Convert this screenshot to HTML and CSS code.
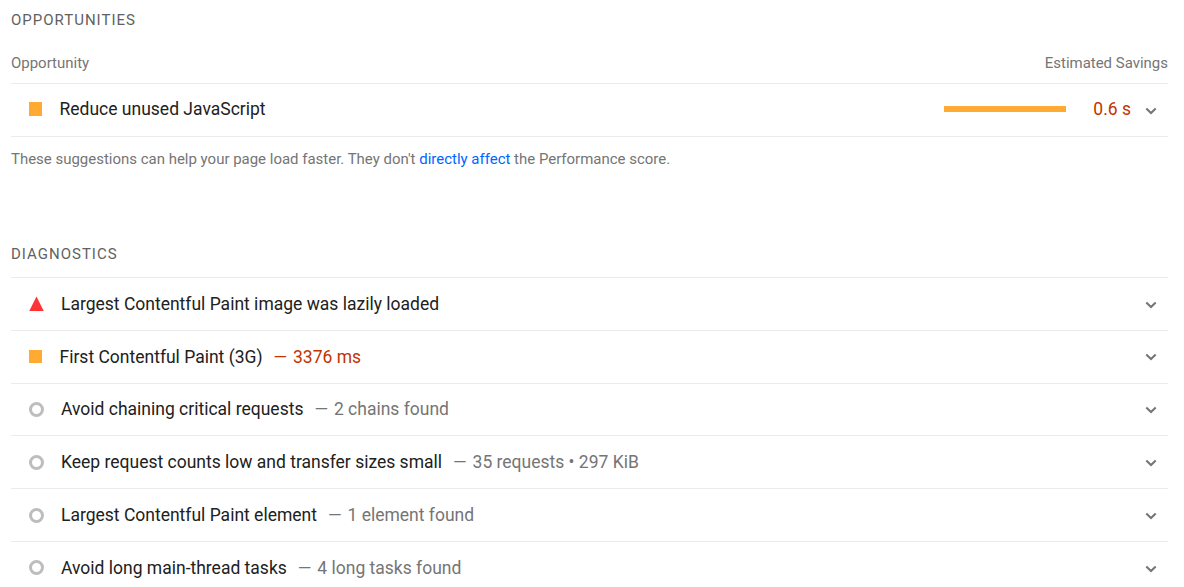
FILE: index.html
```html
<!DOCTYPE html>
<html lang="en">
<head>
  <meta charset="UTF-8">
  <meta name="viewport" content="width=device-width, initial-scale=1.0">
  <title>Performance report</title>
  <link rel="stylesheet" href="styles.css">
</head>
<body>
  <svg class="defs" width="0" height="0">
    <symbol id="chevron" viewBox="0 0 12 8">
      <path d="M1.3 1.6 L6 6 L10.7 1.6" fill="none" stroke="#757575" stroke-width="2.1"/>
    </symbol>
  </svg>

  <section class="opportunities">
    <h2 class="group-title">OPPORTUNITIES</h2>
    <div class="table-head">
      <span>Opportunity</span>
      <span>Estimated Savings</span>
    </div>
    <div class="audit">
      <span class="icon square"></span>
      <span class="title">Reduce unused JavaScript</span>
      <span class="bar"></span>
      <span class="savings">0.6 s</span>
      <svg class="chevron"><use href="#chevron"/></svg>
    </div>
    <p class="footer">These suggestions can help your page load faster. They don't <a href="#">directly affect</a> the Performance score.</p>
  </section>

  <section class="diagnostics">
    <h2 class="group-title">DIAGNOSTICS</h2>
    <div class="audit">
      <span class="icon triangle"></span>
      <span class="title">Largest Contentful Paint image was lazily loaded</span>
      <svg class="chevron"><use href="#chevron"/></svg>
    </div>
    <div class="audit">
      <span class="icon square"></span>
      <span class="title">First Contentful Paint (3G)</span>
      <span class="value average"><span class="dash">—</span> 3376 ms</span>
      <svg class="chevron"><use href="#chevron"/></svg>
    </div>
    <div class="audit">
      <span class="icon circle"></span>
      <span class="title">Avoid chaining critical requests</span>
      <span class="value"><span class="dash">—</span> 2 chains found</span>
      <svg class="chevron"><use href="#chevron"/></svg>
    </div>
    <div class="audit">
      <span class="icon circle"></span>
      <span class="title">Keep request counts low and transfer sizes small</span>
      <span class="value"><span class="dash">—</span> 35 requests • 297 KiB</span>
      <svg class="chevron"><use href="#chevron"/></svg>
    </div>
    <div class="audit">
      <span class="icon circle"></span>
      <span class="title">Largest Contentful Paint element</span>
      <span class="value"><span class="dash">—</span> 1 element found</span>
      <svg class="chevron"><use href="#chevron"/></svg>
    </div>
    <div class="audit">
      <span class="icon circle"></span>
      <span class="title">Avoid long main-thread tasks</span>
      <span class="value"><span class="dash">—</span> 4 long tasks found</span>
      <svg class="chevron"><use href="#chevron"/></svg>
    </div>
  </section>
</body>
</html>
```

FILE: styles.css
```css
* {
  box-sizing: border-box;
}
body {
  margin: 0;
  padding: 0 16px 0 11px;
  height: 587px;
  overflow: hidden;
  background-color: #fff;
  color: #212121;
  font-family: Roboto, sans-serif;
  font-size: 17.5px;
}
.defs {
  display: block;
}
.group-title {
  margin: 0;
  color: #616161;
  font-size: 15px;
  font-weight: 400;
  line-height: 20px;
  letter-spacing: 1px;
}
.opportunities {
  height: 234px;
  padding-top: 10px;
}
.diagnostics {
  padding-top: 10px;
}
.diagnostics .group-title {
  margin-bottom: 13px;
}
.table-head {
  display: flex;
  justify-content: space-between;
  margin-top: 23px;
  height: 30px;
  color: #757575;
  font-size: 14.98px;
  line-height: 20px;
}
.audit {
  display: flex;
  align-items: center;
  height: 52.8px;
  padding: 0 11px 0 18px;
  border-top: 1px solid #ebebeb;
  line-height: 20px;
}
.opportunities .audit {
  height: 54px;
  padding-bottom: 3px;
  border-bottom: 1px solid #ebebeb;
}
.icon {
  flex: none;
}
.square {
  width: 13px;
  height: 13px;
  margin-right: 17.5px;
  background-color: #fa3;
}
.opportunities .square {
  height: 14px;
}
.triangle {
  width: 15px;
  height: 15px;
  margin-right: 17px;
  background-color: #f33;
  clip-path: polygon(50% 0, 100% 100%, 0 100%);
}
.circle {
  width: 15px;
  height: 15px;
  margin-right: 17px;
  border: 3px solid #bdbdbd;
  border-radius: 50%;
}
.title,
.value {
  padding-bottom: 0.2px;
}
.opportunities .title,
.savings {
  padding-top: 1px;
}
.value {
  margin-left: 11px;
  color: #757575;
}
.dash {
  margin-right: 1.5px;
}
.value.average,
.savings {
  color: #c33300;
}
.bar {
  width: 122px;
  height: 6px;
  margin-left: auto;
  background-color: #fa3;
}
.savings {
  width: 65px;
  text-align: right;
}
.chevron {
  width: 12px;
  height: 8px;
  margin-top: 1.4px;
  margin-left: auto;
}
.savings + .chevron {
  margin-top: 4px;
  margin-left: 14px;
}
.footer {
  margin: 12px 0 0;
  color: #757575;
  font-size: 14.98px;
  line-height: 20px;
}
.footer a {
  color: #06f;
  text-decoration: none;
}
```
